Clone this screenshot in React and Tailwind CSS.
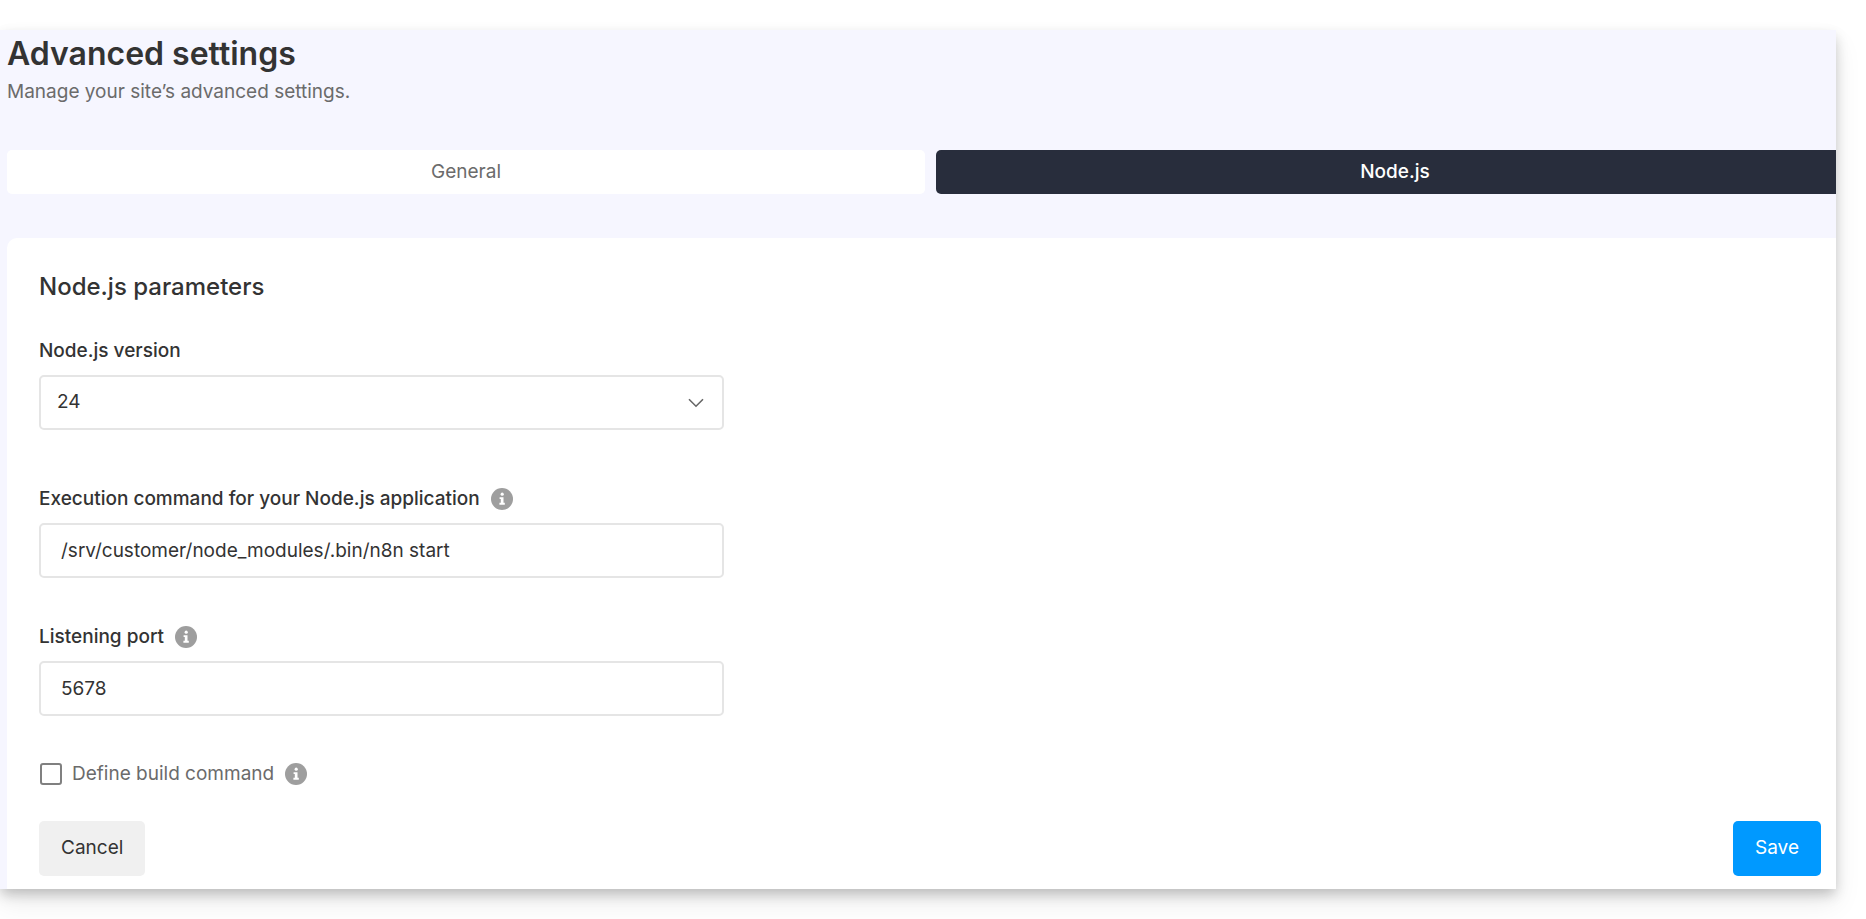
import React, { useState } from 'react';

const inputClass =
    'block w-full h-[55px] rounded-[5px] border-2 border-[#e5e5e5] bg-white text-[19px] text-[#333333] outline-none focus:border-[#0099ff]';

function InfoIcon() {
    return (
        <svg viewBox="0 0 22 22" className="w-[22px] h-[22px] shrink-0" aria-hidden="true">
            <circle cx="11" cy="11" r="11" fill="#9e9e9e" />
            <circle cx="11.2" cy="6.2" r="1.6" fill="#fff" />
            <path d="M8.6 9.2h3.9v5.6h1.3v1.9H8.4v-1.9h1.4v-3.7H8.6z" fill="#fff" />
        </svg>
    );
}

function ChevronIcon() {
    return (
        <svg
            viewBox="0 0 16 10"
            className="absolute right-5 top-[23px] w-4 h-[10px] pointer-events-none"
            fill="none"
            stroke="#666"
            strokeWidth="1.6"
            aria-hidden="true"
        >
            <path d="M1 1.2l7 7 7-7" />
        </svg>
    );
}

export default function App() {
    const [tab, setTab] = useState('node');
    const [version, setVersion] = useState('24');
    const [command, setCommand] = useState('/srv/customer/node_modules/.bin/n8n start');
    const [port, setPort] = useState('5678');
    const [build, setBuild] = useState(false);

    const tabClass = (name) =>
        name === tab
            ? 'h-11 rounded-[5px] text-[19px] bg-[#282d3c] text-white font-medium'
            : 'h-11 rounded-[5px] text-[19px] bg-white text-[#6b6b6b]';

    return (
        <div className="bg-white pt-[30px] pb-[30px] pr-[30px] overflow-hidden font-['Inter',sans-serif] text-[#333333]">
            <main className="bg-[#f6f6ff] shadow-[0_6px_12px_-1px_rgba(0,0,0,0.22),0_14px_26px_rgba(0,0,0,0.08)]">
                <div className="overflow-hidden pl-[7px]">
                    <header className="pt-1">
                        <h1 className="text-[32px] leading-10 font-semibold">Advanced settings</h1>
                        <p className="text-[19px] leading-9 text-[#6b6b6b]">Manage your site’s advanced settings.</p>
                    </header>

                    {/* Tabs and card run past the right edge of the panel */}
                    <div className="mt-10 -mr-[18px] grid grid-cols-2 gap-[11px]" role="tablist">
                        <button role="tab" aria-selected={tab === 'general'} className={tabClass('general')} onClick={() => setTab('general')}>
                            General
                        </button>
                        <button role="tab" aria-selected={tab === 'node'} className={tabClass('node')} onClick={() => setTab('node')}>
                            Node.js
                        </button>
                    </div>

                    <form
                        className="mt-11 -mr-[18px] rounded-tl-[10px] bg-white pt-8 pb-[13px] pl-8 pr-[33px]"
                        onSubmit={(e) => e.preventDefault()}
                    >
                        <h2 className="text-2xl leading-[34px] font-medium">Node.js parameters</h2>

                        <div className="max-w-[685px]">
                            <div className="mt-[33px]">
                                <label htmlFor="version" className="block text-[19px] leading-7 font-medium">
                                    Node.js version
                                </label>
                                <div className="relative mt-[10px]">
                                    <select
                                        id="version"
                                        value={version}
                                        onChange={(e) => setVersion(e.target.value)}
                                        className={`${inputClass} appearance-none px-4`}
                                    >
                                        <option>24</option>
                                        <option>22</option>
                                        <option>20</option>
                                    </select>
                                    <ChevronIcon />
                                </div>
                            </div>

                            <div className="mt-[55px]">
                                <div className="flex items-center gap-[11px]">
                                    <label htmlFor="command" className="text-[19px] leading-7 font-medium">
                                        Execution command for your Node.js application
                                    </label>
                                    <InfoIcon />
                                </div>
                                <input
                                    id="command"
                                    type="text"
                                    value={command}
                                    onChange={(e) => setCommand(e.target.value)}
                                    className={`${inputClass} mt-[10px] px-5`}
                                />
                            </div>

                            <div className="mt-[45px]">
                                <div className="flex items-center gap-[11px]">
                                    <label htmlFor="port" className="text-[19px] leading-7 font-medium">
                                        Listening port
                                    </label>
                                    <InfoIcon />
                                </div>
                                <input
                                    id="port"
                                    type="text"
                                    value={port}
                                    onChange={(e) => setPort(e.target.value)}
                                    className={`${inputClass} mt-[10px] px-5`}
                                />
                            </div>
                        </div>

                        <div className="mt-11 flex items-center">
                            <input
                                id="build"
                                type="checkbox"
                                checked={build}
                                onChange={(e) => setBuild(e.target.checked)}
                                className="ml-px w-[22px] h-[22px] appearance-none rounded-[3px] border-2 border-[#808080] bg-white checked:bg-[#0099ff]"
                            />
                            <label htmlFor="build" className="ml-[10px] mr-[11px] text-[19px] leading-7 text-[#6b6b6b]">
                                Define build command
                            </label>
                            <InfoIcon />
                        </div>

                        <div className="mt-[33px] flex items-center justify-between">
                            <button type="button" className="h-[55px] px-[22px] rounded-[5px] bg-[#f0f0f0] text-[19px]">
                                Cancel
                            </button>
                            <button type="submit" className="h-[55px] px-[22px] rounded-[5px] bg-[#0099ff] text-[19px] text-white">
                                Save
                            </button>
                        </div>
                    </form>
                </div>
            </main>
        </div>
    );
}
